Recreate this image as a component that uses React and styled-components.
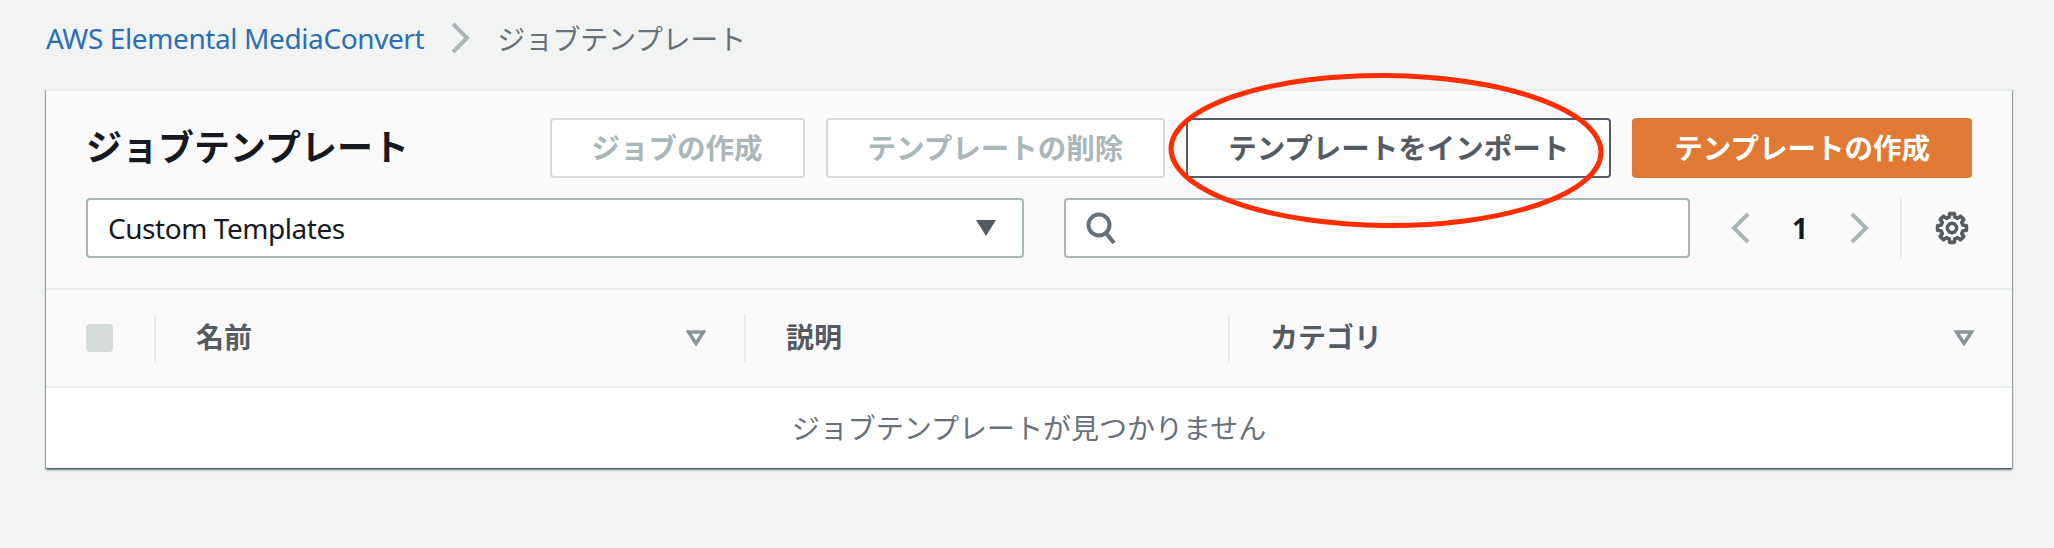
import React from "react";
import styled, { createGlobalStyle } from "styled-components";

const GlobalStyle = createGlobalStyle`
  html, body {
    margin: 0;
    padding: 0;
    background: #f2f3f3;
  }
  body {
    font-family: "Noto Sans", "Noto Sans CJK JP", sans-serif;
    color: #16191f;
  }
  * {
    box-sizing: border-box;
  }
`;

const Page = styled.div`
  position: relative;
  width: 2054px;
  height: 548px;
  padding: 0 42px 0 46px;
  overflow: hidden;
`;

const Breadcrumb = styled.nav`
  display: flex;
  align-items: center;
  height: 76px;
  margin-bottom: 13px;
  font-size: 28px;
`;

const CrumbLink = styled.a`
  color: #2a6fb5;
  letter-spacing: -0.4px;
`;

const CrumbCurrent = styled.span`
  color: #687078;
  letter-spacing: -0.3px;
`;

const CrumbSeparator = styled.svg`
  width: 20px;
  height: 32px;
  margin: 0 27px 0 26px;
`;

const Card = styled.section`
  background: #fff;
  border-top: 2px solid #eaeded;
  box-shadow: 0 2px 2px 0 rgba(0, 28, 36, 0.5), 1px 1px 1px 0 rgba(0, 28, 36, 0.25),
    -1px 1px 1px 0 rgba(0, 28, 36, 0.25);
`;

const CardHeader = styled.header`
  display: flex;
  flex-direction: column;
  gap: 20px;
  padding: 27px 40px 30px 40px;
  background: #fafafa;
  border-bottom: 2px solid #eaeded;
`;

const TitleRow = styled.div`
  display: flex;
  align-items: center;
  gap: 21px;
`;

const Title = styled.h1`
  flex: 1;
  margin: 0;
  font-size: 36px;
  line-height: 60px;
  font-weight: 700;
`;

const Button = styled.button`
  height: 60px;
  padding: 0 40px 4px;
  border: 2px solid ${(props) => props.$border};
  border-radius: 4px;
  background: ${(props) => props.$background};
  color: ${(props) => props.$color};
  font-family: inherit;
  font-size: 28.5px;
  font-weight: 700;
`;

const FilterRow = styled.div`
  display: flex;
  align-items: center;
`;

const Select = styled.div`
  display: flex;
  align-items: center;
  justify-content: space-between;
  width: 938px;
  height: 60px;
  padding: 0 26px 0 20px;
  border: 2px solid #aab7b8;
  border-radius: 4px;
  background: #fff;
  font-size: 28px;
  letter-spacing: -0.45px;
`;

const SelectArrow = styled.svg`
  width: 20px;
  height: 16px;
  fill: #545b64;
`;

const Search = styled.div`
  display: flex;
  align-items: center;
  width: 626px;
  height: 60px;
  margin-left: 40px;
  padding-left: 20px;
  border: 2px solid #aab7b8;
  border-radius: 4px;
  background: #fff;
`;

const SearchIcon = styled.svg`
  width: 30px;
  height: 32px;
  fill: none;
  stroke: #687078;
  stroke-width: 4;
`;

const Pager = styled.div`
  display: flex;
  align-items: center;
  margin-left: 41px;
`;

const PagerChevron = styled.svg`
  width: 20px;
  height: 32px;
  fill: none;
  stroke: #aab7b8;
  stroke-width: 4;
`;

const PageNumber = styled.span`
  width: 98px;
  text-align: center;
  font-size: 28px;
  font-weight: 700;
`;

const SettingsCell = styled.div`
  display: flex;
  align-items: center;
  height: 60px;
  margin-left: 31px;
  padding-left: 32px;
  border-left: 2px solid #eaeded;
`;

const GearIcon = styled.svg`
  width: 36px;
  height: 36px;
  fill: none;
  stroke: #545b64;
  stroke-width: 3.6;
  stroke-linejoin: round;
`;

const HeadRow = styled.div`
  display: grid;
  grid-template-columns: 108px 590px 484px 1fr;
  align-items: center;
  height: 98px;
  background: #fafafa;
  border-bottom: 2px solid #eaeded;
`;

const CheckCell = styled.div`
  padding-left: 40px;
`;

const Checkbox = styled.div`
  width: 27px;
  height: 28px;
  border-radius: 4px;
  background: #d5dbdb;
`;

const HeadCell = styled.div`
  display: flex;
  align-items: center;
  justify-content: space-between;
  height: 48px;
  padding: 0 38px 0 40px;
  border-left: 2px solid #eaeded;
  color: #545b64;
  font-size: 28px;
  font-weight: 700;
`;

const HeadLabel = styled.span`
  padding-bottom: 4px;
`;

const SortIcon = styled.svg`
  width: 20px;
  height: 16px;
  fill: none;
  stroke: #879596;
  stroke-width: 3.5;
`;

const EmptyRow = styled.div`
  display: flex;
  align-items: center;
  justify-content: center;
  height: 80px;
  padding-bottom: 2px;
  color: #687078;
  font-size: 28px;
`;

const Annotation = styled.svg`
  position: absolute;
  left: 1160px;
  top: 65px;
  width: 450px;
  height: 170px;
  fill: none;
  stroke: #ff2d00;
  stroke-width: 5;
`;

// 8 tooth gear outline, like the console's preferences icon
const gearPath = Array.from({ length: 8 }, (_, i) => {
  const base = (i * Math.PI) / 4 - Math.PI / 2;
  const point = (r, deg) => {
    const a = base + (deg * Math.PI) / 180;
    return `${(18 + r * Math.cos(a)).toFixed(2)} ${(18 + r * Math.sin(a)).toFixed(2)}`;
  };
  return `${i === 0 ? "M" : "L"}${point(11.2, -15)} L${point(14.6, -9)} L${point(14.6, 9)} L${point(11.2, 15)}`;
}).join(" ") + " Z";

function SortArrow() {
  return (
    <SortIcon viewBox="0 0 20 16">
      <path d="M2.5 2h15L10 13.5z" />
    </SortIcon>
  );
}

export default function App() {
  return (
    <Page>
      <GlobalStyle />
      <Breadcrumb>
        <CrumbLink>AWS Elemental MediaConvert</CrumbLink>
        <CrumbSeparator viewBox="0 0 20 32" fill="none" stroke="#aab7b8" strokeWidth="4">
          <path d="M3 2l14 14L3 30" />
        </CrumbSeparator>
        <CrumbCurrent>ジョブテンプレート</CrumbCurrent>
      </Breadcrumb>
      <Card>
        <CardHeader>
          <TitleRow>
            <Title>ジョブテンプレート</Title>
            <Button $border="#d5dbdb" $background="#fff" $color="#aab7b8">ジョブの作成</Button>
            <Button $border="#d5dbdb" $background="#fff" $color="#aab7b8">テンプレートの削除</Button>
            <Button $border="#545b64" $background="#fff" $color="#545b64">テンプレートをインポート</Button>
            <Button $border="#df7934" $background="#df7934" $color="#fff">テンプレートの作成</Button>
          </TitleRow>
          <FilterRow>
            <Select>
              Custom Templates
              <SelectArrow viewBox="0 0 20 16">
                <path d="M0 0h20L10 16z" />
              </SelectArrow>
            </Select>
            <Search>
              <SearchIcon viewBox="0 0 30 32">
                <circle cx="13" cy="13" r="10.5" />
                <path d="M20 21l8 10" />
              </SearchIcon>
            </Search>
            <Pager>
              <PagerChevron viewBox="0 0 20 32">
                <path d="M17 2L3 16l14 14" />
              </PagerChevron>
              <PageNumber>1</PageNumber>
              <PagerChevron viewBox="0 0 20 32">
                <path d="M3 2l14 14L3 30" />
              </PagerChevron>
            </Pager>
            <SettingsCell>
              <GearIcon viewBox="0 0 36 36">
                <path d={gearPath} />
                <circle cx="18" cy="18" r="4.6" />
              </GearIcon>
            </SettingsCell>
          </FilterRow>
        </CardHeader>
        <HeadRow>
          <CheckCell>
            <Checkbox />
          </CheckCell>
          <HeadCell>
            <HeadLabel>名前</HeadLabel>
            <SortArrow />
          </HeadCell>
          <HeadCell>
            <HeadLabel>説明</HeadLabel>
          </HeadCell>
          <HeadCell>
            <HeadLabel>カテゴリ</HeadLabel>
            <SortArrow />
          </HeadCell>
        </HeadRow>
        <EmptyRow>ジョブテンプレートが見つかりません</EmptyRow>
      </Card>
      <Annotation viewBox="0 0 450 170">
        <ellipse cx="226" cy="85.5" rx="215" ry="75" transform="rotate(0.5 226 85.5)" />
      </Annotation>
    </Page>
  );
}
